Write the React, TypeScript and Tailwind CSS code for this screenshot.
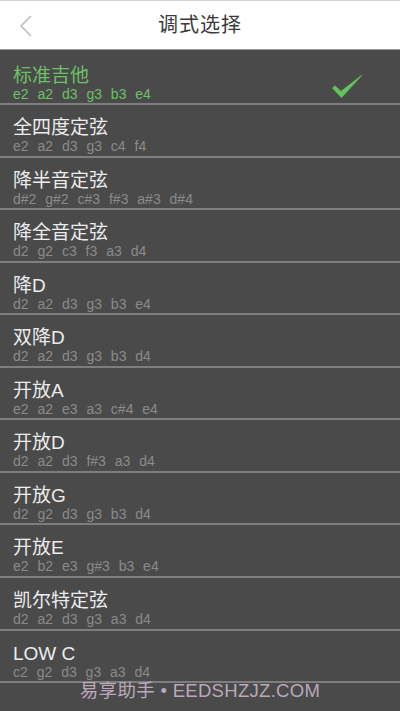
import React from "react";

type Tuning = { name: string; notes: string; selected?: boolean };

const tunings: Tuning[] = [
  { name: "标准吉他", notes: "e2 a2 d3 g3 b3 e4", selected: true },
  { name: "全四度定弦", notes: "e2 a2 d3 g3 c4 f4" },
  { name: "降半音定弦", notes: "d#2 g#2 c#3 f#3 a#3 d#4" },
  { name: "降全音定弦", notes: "d2 g2 c3 f3 a3 d4" },
  { name: "降D", notes: "d2 a2 d3 g3 b3 e4" },
  { name: "双降D", notes: "d2 a2 d3 g3 b3 d4" },
  { name: "开放A", notes: "e2 a2 e3 a3 c#4 e4" },
  { name: "开放D", notes: "d2 a2 d3 f#3 a3 d4" },
  { name: "开放G", notes: "d2 g2 d3 g3 b3 d4" },
  { name: "开放E", notes: "e2 b2 e3 g#3 b3 e4" },
  { name: "凯尔特定弦", notes: "d2 a2 d3 g3 a3 d4" },
  { name: "LOW C", notes: "c2 g2 d3 g3 a3 d4" },
];

const font = { fontFamily: '"Liberation Sans", "Noto Sans CJK SC", sans-serif' };

function Check() {
  return (
    <svg width="32" height="26" viewBox="0 0 32 26">
      <path d="M1 14 L4 11.5 L10 17 L30.5 1 L31 1.5 L10.5 24 Z" fill="#62c25c" />
    </svg>
  );
}

export default function App() {
  return (
    <div className="relative w-[400px] h-[711px] overflow-hidden bg-[#4a4a4a]" style={font}>
      <div className="h-[50px] bg-white border-t border-[#cfd8cf] border-b border-b-[#9a9a9a] flex items-center relative">
        <svg className="absolute left-[19px] top-[14px]" width="14" height="22" viewBox="0 0 14 22">
          <path d="M12 1 L2 11 L12 21" fill="none" stroke="#bdbdbd" strokeWidth="1.6" />
        </svg>
        <div className="w-full text-center text-[20px] text-[#3a3a3a] tracking-[1px]">调式选择</div>
      </div>
      <div className="flex flex-col pt-[2.5px]">
        {tunings.map((t) => (
          <div
            key={t.name}
            className="h-[52.55px] border-b-2 border-[#7e7e7e] flex items-end pb-[2.5px] pl-[13px] pr-[37px]"
          >
            <div className="flex-1">
              <div
                className={`text-[19px] leading-[20px] ${t.selected ? "text-[#6cc066]" : "text-[#ececec]"}`}
              >
                {t.name}
              </div>
              <div
                className={`text-[14px] leading-[14px] mt-[1px] [word-spacing:5px] ${t.selected ? "text-[#6cc066]" : "text-[#8a8a8a]"}`}
              >
                {t.notes}
              </div>
            </div>
            {t.selected && (
              <div className="mb-[1px]">
                <Check />
              </div>
            )}
          </div>
        ))}
      </div>
      <div className="absolute left-0 right-0 top-[677px] text-center text-[18.5px] text-[#b9a9ba] tracking-[0.3px]">
        易享助手 • EEDSHZJZ.COM
      </div>
    </div>
  );
}
